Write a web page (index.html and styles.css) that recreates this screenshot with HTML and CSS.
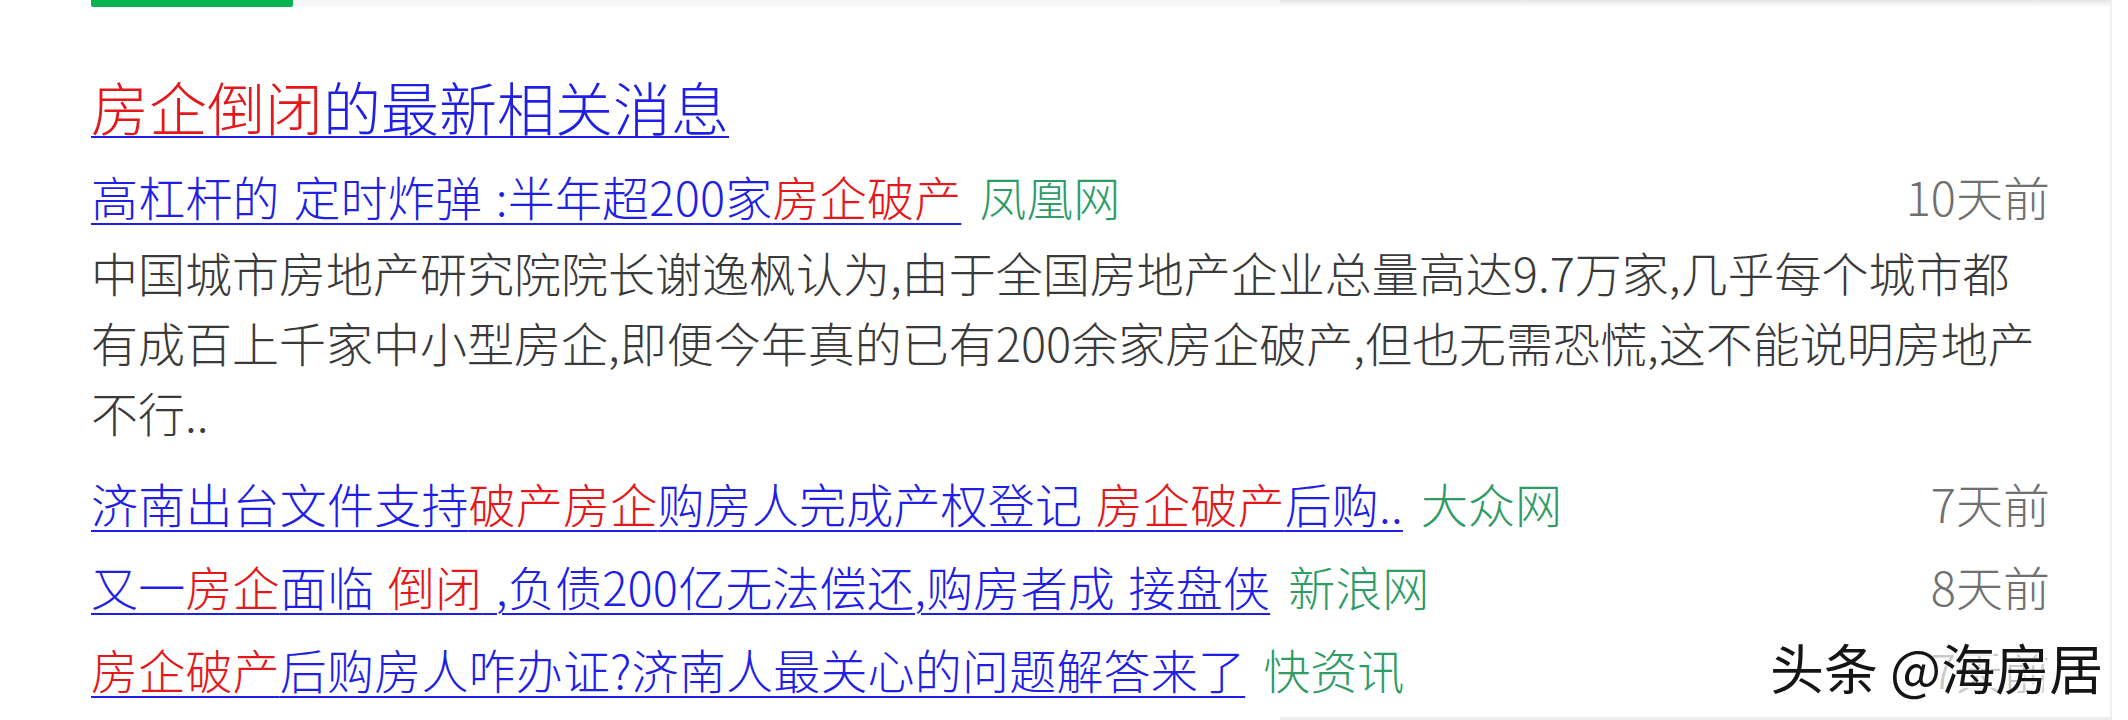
FILE: index.html
```html
<!DOCTYPE html>
<html lang="zh-CN">
<head>
<meta charset="utf-8">
<title>房企倒闭的最新相关消息</title>
<link rel="stylesheet" href="styles.css">
</head>
<body>
<div class="page">
  <div class="strip">
    <div class="strip-pad"></div>
    <div class="strip-active"></div>
    <div class="strip-gray"></div>
    <div class="strip-shade"></div>
  </div>
  <div class="results">
    <h3 class="title"><a class="link"><em>房企倒闭</em>的最新相关消息</a></h3>
    <div class="row row-first">
      <a class="link">高杠杆的 定时炸弹 :半年超200家<em>房企破产</em></a>
      <span class="source">凤凰网</span>
      <span class="time">10天前</span>
    </div>
    <p class="summary">中国城市房地产研究院院长谢逸枫认为,由于全国房地产企业总量高达9.7万家,几乎每个城市都<br>有成百上千家中小型房企,即便今年真的已有200余家房企破产,但也无需恐慌,这不能说明房地产<br>不行..</p>
    <div class="rows">
      <div class="row">
        <a class="link">济南出台文件支持<em>破产房企</em>购房人完成产权登记 <em>房企破产</em>后购..</a>
        <span class="source">大众网</span>
        <span class="time">7天前</span>
      </div>
      <div class="row">
        <a class="link">又一<em>房企</em>面临 <em>倒闭</em> ,负债200亿无法偿还,购房者成 接盘侠</a>
        <span class="source">新浪网</span>
        <span class="time">8天前</span>
      </div>
      <div class="row">
        <a class="link"><em>房企破产</em>后购房人咋办证?济南人最关心的问题解答来了</a>
        <span class="source">快资讯</span>
        <span class="time time-hidden">7天前</span>
      </div>
    </div>
  </div>
  <div class="bottom-edge"></div>
  <div class="watermark">头条 @海房居</div>
</div>
</body>
</html>
```

FILE: styles.css
```css
html, body {
  margin: 0;
  padding: 0;
  background: #fff;
}
body {
  font-family: "Noto Sans CJK SC", "Noto Sans", sans-serif;
  font-weight: 300;
  width: 2128px;
  height: 720px;
  overflow: hidden;
}
.page {
  position: relative;
  width: 2112px;
  height: 720px;
  border-right: 2px solid #efefef;
  box-sizing: border-box;
}
.strip {
  display: flex;
  height: 7px;
}
.strip-pad {
  width: 91px;
}
.strip-active {
  width: 202px;
  background: #08b252;
  border-radius: 0 0 2px 2px;
}
.strip-gray {
  width: 987px;
  height: 6px;
  background: #f7f7f7;
}
.strip-shade {
  flex: 1;
  height: 7px;
  background: linear-gradient(#e4e4e4, #f4f4f4 60%, #fdfdfd);
}
.results {
  width: 1959px;
  padding-left: 91px;
}
.link {
  color: #1f1fe6;
  text-decoration: underline;
  text-decoration-thickness: 2px;
  text-underline-offset: 7px;
  white-space: nowrap;
}
.link em {
  font-style: normal;
  color: #e4181a;
}
.title {
  margin: 63px 0 0;
  font-size: 58px;
  font-weight: 300;
  line-height: 72px;
}
.title .link {
  text-underline-offset: 5px;
}
.row {
  display: flex;
  align-items: baseline;
  font-size: 47px;
  line-height: 83px;
}
.row .link {
  letter-spacing: 0.2px;
  word-spacing: 3px;
}
.row-first {
  margin-top: 21px;
  line-height: 65px;
}
.source {
  margin-left: 18px;
  color: #2f9c66;
  white-space: nowrap;
}
.time {
  margin-left: auto;
  color: #707070;
  white-space: nowrap;
}
.time-hidden {
  color: #c8c8c8;
}
.summary {
  margin: 9px 0 0;
  font-size: 47px;
  line-height: 70px;
  color: #3a3a3a;
  white-space: nowrap;
}
.rows {
  margin-top: 14px;
}
.bottom-edge {
  margin: 7px 0 0 1280px;
  height: 3px;
  background: #ececec;
}
.watermark {
  position: absolute;
  left: 1770px;
  top: 637px;
  font-size: 54px;
  line-height: 60px;
  font-weight: 400;
  color: #151515;
  background: transparent;
  text-shadow: 2px 2px 1px rgba(255, 255, 255, 0.9);
  white-space: nowrap;
}
```
